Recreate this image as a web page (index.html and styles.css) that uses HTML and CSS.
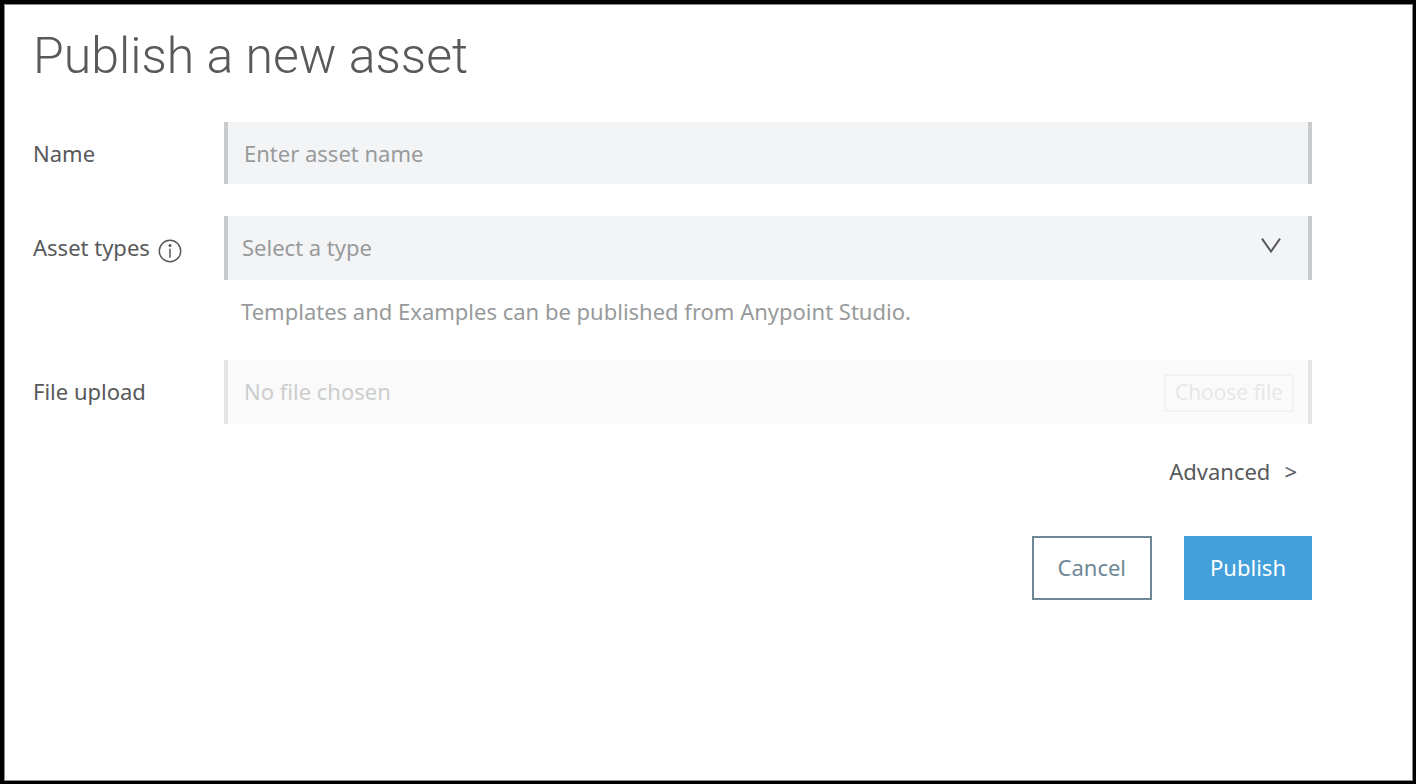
FILE: index.html
```html
<!DOCTYPE html>
<html lang="en">
<head>
<meta charset="utf-8">
<meta name="viewport" content="width=device-width, initial-scale=1">
<title>Publish a new asset</title>
<link rel="stylesheet" href="styles.css">
</head>
<body>
<main class="page">
  <h1 class="title">Publish a new asset</h1>
  <form class="form">
    <div class="row row-name">
      <label class="label" for="name">Name</label>
      <input class="field" id="name" type="text" placeholder="Enter asset name">
    </div>
    <div class="row">
      <div class="label label-info">
        <label for="type">Asset types</label>
        <svg class="info" viewBox="0 0 24 24" aria-hidden="true">
          <circle cx="12" cy="12" r="10.7" fill="none" stroke="currentColor" stroke-width="1.5"/>
          <circle cx="12" cy="6.4" r="1.5" fill="currentColor"/>
          <path d="M12 9.8v9" stroke="currentColor" stroke-width="1.5"/>
        </svg>
      </div>
      <div class="select-wrap">
        <select class="field select" id="type">
          <option>Select a type</option>
        </select>
        <svg class="chevron" viewBox="0 0 20 16" aria-hidden="true">
          <path d="M1 .6l9 13 9-13" fill="none" stroke="currentColor" stroke-width="2"/>
        </svg>
      </div>
    </div>
    <p class="hint">Templates and Examples can be published from Anypoint Studio.</p>
    <div class="row">
      <label class="label" for="file">File upload</label>
      <div class="upload">
        <input class="upload-name" id="file" type="text" placeholder="No file chosen" disabled>
        <button class="choose" type="button" disabled>Choose file</button>
      </div>
    </div>
    <button class="advanced" type="button"><span>Advanced</span><span>&gt;</span></button>
    <div class="actions">
      <button class="btn btn-cancel" type="button">Cancel</button>
      <button class="btn btn-publish" type="submit">Publish</button>
    </div>
  </form>
</main>
</body>
</html>
```
FILE: styles.css
```css
* {
  box-sizing: border-box;
}

body {
  margin: 0;
  background: #000;
  padding: 4px 3px 3px 4px;
  min-height: 100vh;
  display: flex;
}

body,
input,
select,
button {
  font-family: "Noto Sans", "Open Sans", sans-serif;
  font-size: 22px;
  line-height: 32px;
  color: #58595a;
}

.page {
  flex: 1;
  background: #fff;
  border: 1px solid #8a8a8a;
  padding: 19px 100px 24px 28px;
}

.title {
  margin: 0 0 34px;
  font-family: Roboto, sans-serif;
  font-weight: 300;
  font-size: 50px;
  line-height: 64px;
}

.form {
  display: flex;
  flex-direction: column;
}

.row {
  display: grid;
  grid-template-columns: 191px 1fr;
  align-items: center;
}

.row-name {
  margin-bottom: 32px;
}

.label {
  padding-bottom: 2px;
}

.row-name .label {
  padding-bottom: 0;
}

.label-info {
  display: flex;
  align-items: center;
  gap: 8px;
}

.info {
  width: 24px;
  height: 24px;
  margin-top: 8px;
}

.field {
  width: 100%;
  height: 64px;
  padding: 0 16px;
  border: solid #c9cacb;
  border-width: 0 4px;
  border-radius: 0;
  background: #f3f4f6;
  outline: 0;
}

.row-name .field {
  height: 62px;
}

.field::placeholder {
  color: #989a9b;
  opacity: 1;
}

.select-wrap {
  display: grid;
  align-items: center;
}

.select {
  grid-area: 1 / 1;
  appearance: none;
  padding: 0 14px 2px;
  color: #989a9b;
}

.chevron {
  grid-area: 1 / 1;
  justify-self: end;
  width: 20px;
  height: 16px;
  margin: 0 31px 4px 0;
  pointer-events: none;
}

.hint {
  margin: 15px 0 33px 208px;
  color: #989a9b;
}

.upload {
  display: flex;
  align-items: center;
  height: 64px;
  padding: 0 14px 0 16px;
  border: solid #e4e4e4;
  border-width: 0 4px;
  background: #fafafa;
}

.upload-name {
  flex: 1;
  min-width: 0;
  padding: 0 0 2px;
  border: 0;
  background: none;
}

.upload-name::placeholder {
  color: #cccdcd;
  opacity: 1;
}

.choose {
  height: 38px;
  margin-top: 2px;
  padding: 0 9px 2px;
  border: 2px solid #f2f2f2;
  background: none;
  color: #e6e7e7;
  font-family: "Open Sans", "Noto Sans", sans-serif;
  font-size: 21px;
  line-height: 32px;
}

.advanced {
  display: flex;
  gap: 14px;
  align-self: flex-end;
  margin: 31px 15px 49px 0;
  padding: 0;
  border: 0;
  background: none;
}

.actions {
  display: flex;
  justify-content: flex-end;
  gap: 32px;
}

.btn {
  height: 64px;
  padding: 0 24px 2px;
  border: 2px solid #6f8796;
  background: #fff;
  color: #6f8796;
}

.btn-publish {
  border-color: #44a0da;
  background: #44a0da;
  color: #fff;
}
```
